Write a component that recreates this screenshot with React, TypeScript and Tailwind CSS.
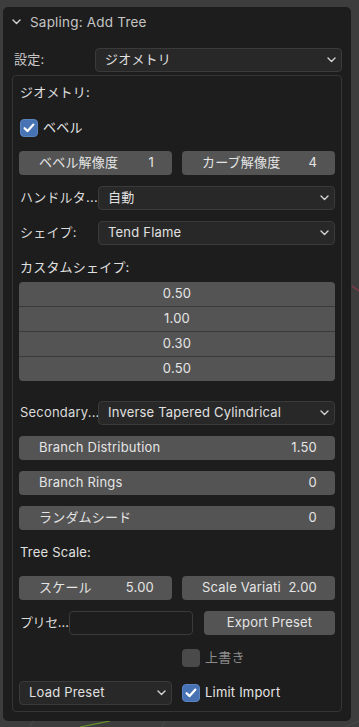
import React from "react";

const Chevron = ({ className = "" }: { className?: string }) => (
  <svg width="9" height="6" viewBox="0 0 9 6" className={className}>
    <path d="M1 1 L4.5 4.5 L8 1" fill="none" stroke="#d6d6d6" strokeWidth="1.4" strokeLinecap="round" strokeLinejoin="round" />
  </svg>
);

const Check = () => (
  <svg width="14" height="14" viewBox="0 0 14 14">
    <path d="M2.6 7.2 L5.6 10.1 L11.4 3.6" fill="none" stroke="#ffffff" strokeWidth="2.2" strokeLinecap="round" strokeLinejoin="round" />
  </svg>
);

function Dropdown({ value, className = "" }: { value: string; className?: string }) {
  return (
    <div className={`h-[24px] flex items-center justify-between rounded-[4px] bg-[#282828] border border-[#3a3a3a] pl-[9px] pr-[5px] text-[#e0e0e0] ${className}`}>
      <span className="truncate">{value}</span>
      <Chevron />
    </div>
  );
}

function NumField({ label, value, className = "" }: { label: string; value: string; className?: string }) {
  return (
    <div className={`h-[24px] flex items-center justify-between rounded-[4px] bg-[#545454] pl-[20px] pr-[18px] text-[#e5e5e5] ${className}`}>
      <span className="whitespace-nowrap overflow-hidden">{label}</span>
      <span className="whitespace-nowrap">{value}</span>
    </div>
  );
}

function Checkbox({ checked }: { checked: boolean }) {
  return (
    <div className={`w-[18px] h-[18px] rounded-[4px] flex items-center justify-center ${checked ? "bg-[#4772b3] border border-[#5a83c0]" : "bg-[#4a4a4a]"}`}>
      {checked && <Check />}
    </div>
  );
}

function LabeledRow({ label, value }: { label: string; value: string }) {
  return (
    <div className="h-[24px] flex items-center">
      <span className="w-[79px] pl-[1px] whitespace-nowrap text-[#dadada]">{label}</span>
      <Dropdown value={value} className="flex-1" />
    </div>
  );
}

export default function App() {
  const shape = ["0.50", "1.00", "0.30", "0.50"];

  return (
    <div className="relative w-[359px] h-[727px] bg-[#3d3d3d] overflow-hidden text-[13px] tracking-[0.2px] font-['Inter','Noto_Sans_CJK_JP',sans-serif]">
      {/* viewport behind the panel */}
      <svg className="absolute inset-0" width="359" height="727">
        <line x1="352" y1="286" x2="359" y2="291" stroke="#8a3a4a" strokeWidth="1.2" />
        <line x1="80" y1="727" x2="110" y2="721" stroke="#6a9a2a" strokeWidth="1.2" />
        <line x1="345" y1="727" x2="359" y2="721" stroke="#4a4a4a" strokeWidth="1" />
        <line x1="30" y1="727" x2="33" y2="721" stroke="#484848" strokeWidth="1" />
        <line x1="162" y1="727" x2="164" y2="721" stroke="#484848" strokeWidth="1" />
      </svg>

      <div className="relative ml-[3px] mt-[7px] w-[348px] h-[714px] rounded-[5px] bg-[#1d1d1d] flex flex-col">
        {/* header */}
        <div className="h-[30px] flex items-center pl-[9px] gap-[9px] text-[#c4c4c4] text-[13.5px]">
          <Chevron />
          <span>Sapling: Add Tree</span>
        </div>

        {/* settings */}
        <div className="mt-[11px] h-[24px] flex items-center pl-[11px] pr-[9px]">
          <span className="w-[81px] text-[#c8c8c8]">設定:</span>
          <Dropdown value="ジオメトリ" className="flex-1" />
        </div>

        {/* inner box */}
        <div className="mt-[3px] mx-[9px] h-[637px] rounded-[4px] border border-[#353535] pt-[5px] pl-[6px] pr-[6px] flex flex-col">
          <div className="h-[24px] flex items-center pl-[1px] text-[#e0e0e0]">ジオメトリ:</div>

          <div className="mt-[11px] h-[24px] flex items-center gap-[5px] pl-[1px] text-[#e5e5e5]">
            <Checkbox checked />
            <span>ベベル</span>
          </div>

          <div className="mt-[11px] grid grid-cols-2 gap-[10px]">
            <NumField label="ベベル解像度" value="1" />
            <NumField label="カーブ解像度" value="4" />
          </div>

          <div className="mt-[11px]">
            <LabeledRow label="ハンドルタ..." value="自動" />
          </div>
          <div className="mt-[11px]">
            <LabeledRow label="シェイプ:" value="Tend Flame" />
          </div>

          <div className="mt-[11px] h-[24px] flex items-center pl-[1px] text-[#e0e0e0]">カスタムシェイプ:</div>

          <div className="mt-[2px] rounded-[4px] bg-[#545454] flex flex-col overflow-hidden">
            {shape.map((v, i) => (
              <div key={i} className={`h-[24px] flex items-center justify-center text-[#e5e5e5] ${i > 0 ? "border-t border-[#3a3a3a] h-[25px]" : ""}`}>
                {v}
              </div>
            ))}
          </div>

          <div className="mt-[20px]">
            <LabeledRow label="Secondary..." value="Inverse Tapered Cylindrical" />
          </div>

          <NumField label="Branch Distribution" value="1.50" className="mt-[11px]" />
          <NumField label="Branch Rings" value="0" className="mt-[11px]" />
          <NumField label="ランダムシード" value="0" className="mt-[11px]" />

          <div className="mt-[11px] h-[24px] flex items-center pl-[1px] text-[#e0e0e0]">Tree Scale:</div>

          <div className="mt-[11px] grid grid-cols-2 gap-[10px]">
            <NumField label="スケール" value="5.00" />
            <NumField label="Scale Variati" value="2.00" />
          </div>

          <div className="mt-[11px] h-[24px] flex items-center">
            <span className="w-[50px] shrink-0 pl-[1px] whitespace-nowrap tracking-[-0.4px] text-[#dadada]">プリセ…</span>
            <div className="w-[124px] h-[24px] rounded-[4px] border border-[#3a3a3a] bg-[#1d1d1d]" />
            <div className="ml-[11px] flex-1 h-[24px] rounded-[4px] bg-[#545454] flex items-center justify-center text-[#e5e5e5]">
              Export Preset
            </div>
          </div>

          <div className="mt-[11px] h-[24px] grid grid-cols-2 gap-[10px]">
            <div />
            <div className="flex items-center gap-[5px] text-[#8c8c8c]">
              <Checkbox checked={false} />
              <span>上書き</span>
            </div>
          </div>

          <div className="mt-[11px] h-[24px] grid grid-cols-2 gap-[10px]">
            <Dropdown value="Load Preset" />
            <div className="flex items-center gap-[5px] text-[#e5e5e5]">
              <Checkbox checked />
              <span>Limit Import</span>
            </div>
          </div>
        </div>
      </div>
    </div>
  );
}
